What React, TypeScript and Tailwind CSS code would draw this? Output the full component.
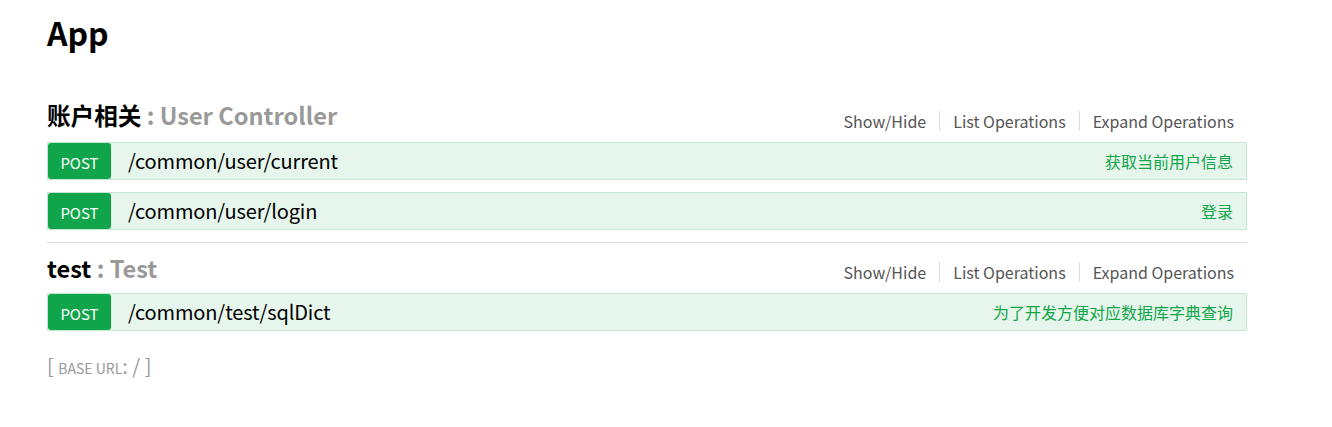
import React from "react";

const font = { fontFamily: '"Noto Sans CJK SC", "Source Sans Pro", sans-serif' };

type Op = { path: string; summary: string };

function OpRow({ op }: { op: Op }) {
  return (
    <div className="flex items-center h-[38px] bg-[#e7f6ec] border border-[#c3e8d1]">
      <div className="flex items-center justify-center w-[63px] h-[36px] pt-[2px] bg-[#10a54a] rounded-[3px] text-white text-[15px] leading-none">
        POST
      </div>
      <div className="flex-1 pl-[17px] text-[20px] leading-none text-black tracking-[-0.15px]">{op.path}</div>
      <div className="pr-[13px] text-[16px] leading-none text-[#10a54a]">{op.summary}</div>
    </div>
  );
}

function Links() {
  return (
    <div className="flex items-center mb-[3px] text-[16px] leading-none text-[#555]">
      <span className="pr-[13px]">Show/Hide</span>
      <span className="h-[20px] w-px bg-[#ddd]" />
      <span className="px-[13px]">List Operations</span>
      <span className="h-[20px] w-px bg-[#ddd]" />
      <span className="pl-[13px] pr-[13px]">Expand Operations</span>
    </div>
  );
}

function Section({ name, desc, ops, first }: { name: string; desc: string; ops: Op[]; first?: boolean }) {
  return (
    <div className={first ? "" : "border-t border-[#ddd]"}>
      <div className={`flex items-end justify-between ${first ? "h-[42px]" : "h-[50px]"} pb-[8px]`}>
        <div className={`text-[23.6px] leading-none font-bold text-black ${first ? "mb-[6px]" : "mb-[4px]"}`}>
          {name} <span className="text-[#999]">: {desc}</span>
        </div>
        <Links />
      </div>
      <div className="flex flex-col gap-[12px] pb-[12px]">
        {ops.map((o) => (
          <OpRow key={o.path} op={o} />
        ))}
      </div>
    </div>
  );
}

export default function App() {
  return (
    <div className="bg-white w-[1332px] h-[427px]" style={font}>
      <div className="w-[1200px] ml-[47px] pt-[13px]">
        <h1 className="text-[32px] leading-[38px] font-bold text-black">App</h1>
        <div className="mt-[49px]">
          <Section
            first
            name="账户相关"
            desc="User Controller"
            ops={[
              { path: "/common/user/current", summary: "获取当前用户信息" },
              { path: "/common/user/login", summary: "登录" },
            ]}
          />
          <Section
            name="test"
            desc="Test"
            ops={[{ path: "/common/test/sqlDict", summary: "为了开发方便对应数据库字典查询" }]}
          />
        </div>
        <div className="mt-[13px] text-[20px] leading-none text-[#999]">
          [ <span className="text-[14px]">BASE URL</span>: / ]
        </div>
      </div>
    </div>
  );
}
